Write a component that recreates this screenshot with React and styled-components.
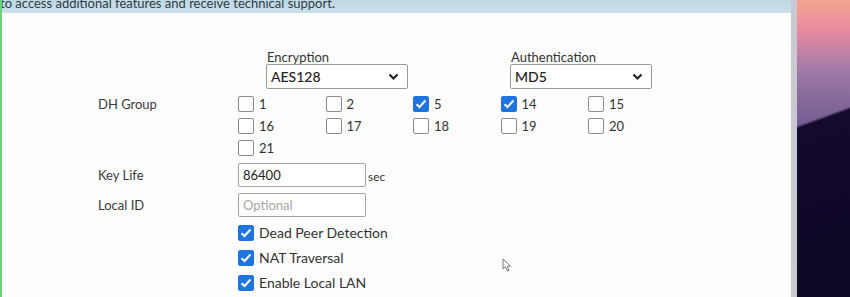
import React from 'react'
import styled, { createGlobalStyle } from 'styled-components'

const GlobalStyle = createGlobalStyle`
  html, body {
    margin: 0;
    padding: 0;
    background: #fdfdfe;
    font-family: Lato, "Open Sans", "Liberation Sans", sans-serif;
  }
`

const Screen = styled.div`
  display: flex;
  width: 850px;
  height: 297px;
  overflow: hidden;
`

const Window = styled.div`
  width: 791px;
  display: flex;
  flex-direction: column;
  border-right: 6px solid #c9c9d2;
  box-shadow: inset -1px 0 0 #e6e6ec;
`

const Banner = styled.div`
  height: 13px;
  flex-shrink: 0;
  overflow: hidden;
  background: linear-gradient(#bfd9e4, #c8e0ea);
  border-left: 2px solid #6fd27a;
  font-size: 13px;
  color: #2e3c44;
  white-space: nowrap;
`

const BannerText = styled.div`
  margin: -5px 0 0 -2px;
  line-height: 16px;
`

const Panel = styled.div`
  flex: 1;
  min-height: 0;
  overflow: hidden;
  position: relative;
  background: #fdfdfe;
  border-left: 2px solid #6fd27a;
  padding: 37px 0 0 96px;
  color: #333;
  font-size: 13px;
`

const Wallpaper = styled.div`
  flex: 1;
  background:
    linear-gradient(160deg, transparent 0, transparent 118px, #140a2c 121px, #0e0725 100%),
    linear-gradient(180deg, #f3a58f 0, #e98aa0 30px, #a07aa6 70px, #7e6498 110px, #6a5490 140px);
`

const Row = styled.div`
  display: grid;
  grid-template-columns: 140px 1fr;
  align-items: ${p => (p.$top ? 'start' : 'center')};
  margin-top: ${p => p.$gap || 0}px;
`

const Label = styled.div`
  color: #3a3a3a;
  line-height: 16px;
  padding-top: ${p => p.$pad || 0}px;
`

const Selects = styled.div`
  display: flex;
  gap: 102px;
  padding-left: 28px;
`

const Field = styled.div`
  display: flex;
  flex-direction: column;
`

const FieldTitle = styled.div`
  line-height: 14px;
  color: #333;
  padding-left: 1px;
`

const Select = styled.div`
  width: 142px;
  height: 25px;
  box-sizing: border-box;
  border: 1px solid #9a9a9a;
  border-radius: 2px;
  display: flex;
  align-items: center;
  justify-content: space-between;
  padding: 0 8px 0 4px;
  font-size: 14px;
  font-weight: 500;
  color: #222;
  background: #fff;
`

const DhGrid = styled.div`
  display: grid;
  grid-template-columns: repeat(5, 87.5px);
  grid-auto-rows: 22px;
  align-items: center;
`

const Option = styled.label`
  display: flex;
  align-items: center;
  gap: 5px;
  color: #333;
  font-size: ${p => (p.$big ? 14 : 13)}px;
  height: ${p => p.$h || 22}px;
`

const Box = styled.span`
  width: 16px;
  height: 16px;
  box-sizing: border-box;
  border-radius: 2px;
  border: 1px solid ${p => (p.$on ? '#1f74e0' : '#8b8b8b')};
  background: ${p => (p.$on ? '#1f74e0' : '#fff')};
  display: flex;
  align-items: center;
  justify-content: center;
  flex-shrink: 0;
`

const InputLine = styled.div`
  display: flex;
  align-items: flex-end;
  gap: 2px;
`

const TextBox = styled.div`
  width: 128px;
  height: 24px;
  box-sizing: border-box;
  border: 1px solid #a3a3a3;
  border-radius: 2px;
  padding: 0 4px;
  display: flex;
  align-items: center;
  font-size: 13px;
  color: ${p => (p.$placeholder ? '#a6a6a6' : '#222')};
  background: #fff;
`

const Unit = styled.span`
  font-size: 12px;
  color: #333;
  padding-bottom: 3px;
`

const Options = styled.div`
  display: flex;
  flex-direction: column;
`

const Cursor = styled.svg`
  position: absolute;
  left: 500px;
  top: 245px;
`

const Chevron = () => (
  <svg width="11" height="8" viewBox="0 0 11 8">
    <path d="M1.5 1.5 L5.5 5.5 L9.5 1.5" fill="none" stroke="#222" strokeWidth="2.2" />
  </svg>
)

const Check = ({ on }) => (
  <Box $on={on}>
    {on && (
      <svg width="12" height="10" viewBox="0 0 12 10">
        <path d="M1.5 5.2 L4.5 8 L10.5 1.5" fill="none" stroke="#fff" strokeWidth="2" />
      </svg>
    )}
  </Box>
)

const groups = [1, 2, 5, 14, 15, 16, 17, 18, 19, 20, 21]
const checkedGroups = [5, 14]

export default function App() {
  return (
    <Screen>
      <GlobalStyle />
      <Window>
        <Banner>
          <BannerText>to access additional features and receive technical support.</BannerText>
        </Banner>
        <Panel>
          <Row>
            <div />
            <Selects>
              <Field>
                <FieldTitle>Encryption</FieldTitle>
                <Select>AES128<Chevron /></Select>
              </Field>
              <Field>
                <FieldTitle>Authentication</FieldTitle>
                <Select>MD5<Chevron /></Select>
              </Field>
            </Selects>
          </Row>
          <Row $top $gap={4}>
            <Label $pad={3}>DH Group</Label>
            <DhGrid>
              {groups.map(g => (
                <Option key={g}>
                  <Check on={checkedGroups.includes(g)} />
                  {g}
                </Option>
              ))}
            </DhGrid>
          </Row>
          <Row $gap={4}>
            <Label>Key Life</Label>
            <InputLine>
              <TextBox>86400</TextBox>
              <Unit>sec</Unit>
            </InputLine>
          </Row>
          <Row $gap={6}>
            <Label>Local ID</Label>
            <TextBox $placeholder>Optional</TextBox>
          </Row>
          <Row $gap={3}>
            <div />
            <Options>
              <Option $big $h={25}><Check on />Dead Peer Detection</Option>
              <Option $big $h={25}><Check on />NAT Traversal</Option>
              <Option $big $h={25}><Check on />Enable Local LAN</Option>
            </Options>
          </Row>
          <Cursor width="10" height="14" viewBox="0 0 10 14">
            <path d="M1 1 L1 11 L3.5 8.8 L5.5 13 L7 12.3 L5.2 8.2 L8.6 8.2 Z" fill="#fff" stroke="#666" strokeWidth="0.9" />
          </Cursor>
        </Panel>
      </Window>
      <Wallpaper />
    </Screen>
  )
}
